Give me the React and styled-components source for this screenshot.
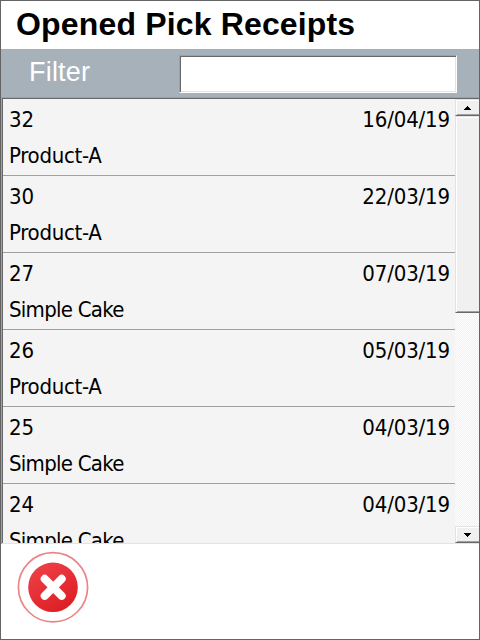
import React from "react";
import styled, { createGlobalStyle } from "styled-components";

const Global = createGlobalStyle`
  * { box-sizing: border-box; }
  body { margin: 0; background: #fff; }
`;

const Screen = styled.div`
  width: 480px;
  height: 640px;
  border: 1px solid #646464;
  background: #fff;
  display: flex;
  flex-direction: column;
  overflow: hidden;
  color: #000;
`;

const Title = styled.h1`
  margin: 0;
  height: 48px;
  flex: none;
  padding-left: 15px;
  font: bold 32px/46px "Liberation Sans", Arial, sans-serif;
  letter-spacing: 0.16px;
  white-space: nowrap;
`;

const FilterBar = styled.div`
  height: 48px;
  flex: none;
  display: flex;
  align-items: flex-start;
  justify-content: space-between;
  padding: 6px 22px 0 28px;
  background: #a7b1b9;
`;

const FilterLabel = styled.label`
  color: #fff;
  font: 27px/35px "Liberation Sans", Arial, sans-serif;
  letter-spacing: 0.2px;
`;

const FilterInput = styled.input`
  width: 278px;
  height: 38px;
  padding: 0 6px;
  border: 1px solid;
  border-color: #a0a0a0 #fff #fff #a0a0a0;
  border-radius: 0;
  outline: none;
  background: #fff;
  box-shadow: inset 1px 1px #696969, inset -1px -1px #e3e3e3;
  font: 24px "Liberation Sans", Arial, sans-serif;
`;

const ListBox = styled.div`
  height: 447px;
  flex: none;
  display: flex;
  margin-left: 1px;
  border-top: 1px solid #a0a0a0;
  border-bottom: 1px solid #e3e3e3;
  box-shadow: -1px 0 #a0a0a0;
`;

const Rows = styled.div`
  flex: 1;
  overflow: hidden;
  border-top: 1px solid #696969;
  border-left: 1px solid #696969;
  background: #f4f4f4;
`;

const Row = styled.div`
  height: 77px;
  padding: 3px 5px 0 6px;
  border-bottom: 1px solid #a0a0a0;
  font: 22px/36px "DejaVu Sans Condensed", "DejaVu Sans", Tahoma, sans-serif;
  font-stretch: condensed;
`;

const RowTop = styled.div`
  display: flex;
  justify-content: space-between;
  letter-spacing: -0.15px;
`;

const Product = styled.div`
  letter-spacing: ${(p) => (p.$wide ? "-0.73px" : "-0.3px")};
`;

const ScrollBar = styled.div`
  width: 24px;
  display: flex;
  flex-direction: column;
  border-top: 1px solid #696969;
  background: repeating-conic-gradient(#f0f0f0 0 25%, #fff 0 50%) 0 0 / 2px 2px;
`;

const Raised = styled.div`
  flex: none;
  height: ${(p) => p.$height}px;
  display: flex;
  align-items: center;
  justify-content: center;
  background: #f0f0f0;
  border: 1px solid;
  border-color: #e3e3e3 transparent #696969 #e3e3e3;
  border-right: 0;
  box-shadow: inset 1px 1px #fff, inset 0 -1px #a0a0a0;
`;

const Track = styled.div`
  flex: 1;
`;

const Footer = styled.div`
  flex: 1;
  padding: 7px 0 0 15px;
`;

const CloseButton = styled.button`
  display: block;
  width: 74px;
  height: 74px;
  padding: 0;
  border: 0;
  background: none;
`;

const receipts = [
  ["32", "16/04/19", "Product-A"],
  ["30", "22/03/19", "Product-A"],
  ["27", "07/03/19", "Simple Cake"],
  ["26", "05/03/19", "Product-A"],
  ["25", "04/03/19", "Simple Cake"],
  ["24", "04/03/19", "Simple Cake"],
];

const Arrow = ({ down }) => (
  <svg width="7" height="4" viewBox="0 0 7 4" shapeRendering="crispEdges" aria-hidden="true">
    <path d={down ? "M0 0H7V1H6V2H5V3H4V4H3V3H2V2H1V1H0Z" : "M0 4H7V3H6V2H5V1H4V0H3V1H2V2H1V3H0Z"} />
  </svg>
);

const CloseIcon = () => (
  <svg width="74" height="74" viewBox="0 0 74 74" aria-hidden="true">
    <defs>
      <linearGradient id="red" x1="0.2" y1="0" x2="0.8" y2="1">
        <stop offset="0" stopColor="#ee4148" />
        <stop offset="1" stopColor="#dc1c22" />
      </linearGradient>
    </defs>
    <circle cx="37" cy="36.3" r="34.6" fill="none" stroke="#ea8588" strokeWidth="1.7" />
    <circle cx="37" cy="36.3" r="24.8" fill="url(#red)" />
    <path d="M28.7 27.8L45.7 44.8M45.7 27.8L28.7 44.8" stroke="#fff" strokeWidth="8" strokeLinecap="round" />
  </svg>
);

export default function App() {
  return (
    <Screen>
      <Global />
      <Title>Opened Pick Receipts</Title>
      <FilterBar>
        <FilterLabel htmlFor="filter">Filter</FilterLabel>
        <FilterInput id="filter" />
      </FilterBar>
      <ListBox>
        <Rows>
          {receipts.map(([id, date, product]) => (
            <Row key={id}>
              <RowTop>
                <span>{id}</span>
                <span>{date}</span>
              </RowTop>
              <Product $wide={product.length > 9}>{product}</Product>
            </Row>
          ))}
        </Rows>
        <ScrollBar>
          <Raised $height={17}>
            <Arrow />
          </Raised>
          <Raised $height={197} />
          <Track />
          <Raised $height={17}>
            <Arrow down />
          </Raised>
        </ScrollBar>
      </ListBox>
      <Footer>
        <CloseButton aria-label="Close">
          <CloseIcon />
        </CloseButton>
      </Footer>
    </Screen>
  );
}
